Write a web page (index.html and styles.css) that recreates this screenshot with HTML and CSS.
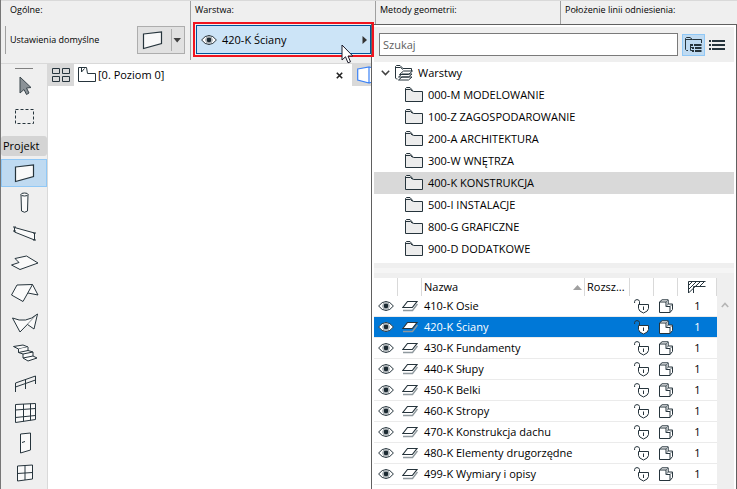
FILE: index.html
```html
<!DOCTYPE html>
<html lang="pl">
<head>
    <meta charset="UTF-8">
    <meta name="viewport" content="width=device-width, initial-scale=1.0">
    <title>Poziom 0</title>
    <link rel="stylesheet" href="styles.css">
</head>
<body>
    <!-- Icon shapes used in the lists -->
    <svg class="sprite" aria-hidden="true">
        <symbol id="eye" viewBox="0 0 16 12">
            <path d="M.6 6Q4 1.5 8 1.5T15.4 6Q12 10.5 8 10.5T.6 6Z" fill="#fff" stroke="#26343c"/>
            <circle cx="8" cy="6" r="3.3" fill="none" stroke="#78848a" stroke-width=".8"/>
            <circle cx="8" cy="6" r="2.4" fill="#1c2a32"/>
        </symbol>
        <symbol id="folder" viewBox="0 0 18 16">
            <path d="M.5 14.5V1.5L1.5 .5H5L8.5 4.5H17.5V14.5Z" fill="#ececec" stroke="#26343c"/>
            <path d="M1 2.5H5.5L7.5 4.5" fill="none" stroke="#26343c"/>
        </symbol>
        <symbol id="layer" viewBox="0 0 16 12">
            <path d="M1 10.5H10.5L15.5 4" fill="none" stroke="#8f999e" stroke-width="1.4"/>
            <path d="M.8 7.5L5.5 1.5H15L10.3 7.5Z" class="sheet" stroke="#26343c" stroke-width="1.2"/>
        </symbol>
        <symbol id="lock" viewBox="0 0 16 15">
            <path d="M.6 4V2.5Q.8 .6 3 .6T5.5 2.5V5" fill="none" stroke="#26343c"/>
            <path d="M4.5 5.5H14.5V9.5Q14.3 12.3 9.5 14Q4.7 12.3 4.5 9.5Z" fill="#fff" stroke="#26343c"/>
            <path d="M9.5 7.5V11" stroke="#26343c"/>
        </symbol>
        <symbol id="solid" viewBox="0 0 14 14">
            <path d="M.5 13.5V3L3 .8H9.2V5H13.5V10.5L11 13.5Z" fill="#fff" stroke="#26343c"/>
            <path d="M.5 3H7V7.5H11V13.5" fill="none" stroke="#26343c"/>
            <path d="M7 3L9 1M7 7.5L9.2 5M11 7.5L13.3 5.3" stroke="#66727a"/>
        </symbol>
        <symbol id="wall" viewBox="0 0 28 22">
            <path d="M4.5 5L22.5 3V14.5L4.5 19.5Z" fill="#f9f9f9" stroke="#26343c" stroke-width="1.2"/>
        </symbol>
    </svg>

    <header class="infobox">
        <section class="panel panel-general">
            <h2>Ogólne:</h2>
            <div class="defaults">
                <span>Ustawienia domyślne</span>
                <button class="wall-btn" type="button" aria-label="Ściana">
                    <svg width="28" height="22"><use href="#wall"/></svg>
                    <svg class="split" width="12" height="22" viewBox="0 0 12 22"><path d="M.5 0V22" stroke="#adadad"/><path d="M2.5 9H10L6.2 13.5Z" fill="#404040"/></svg>
                </button>
            </div>
        </section>
        <section class="panel">
            <h2>Warstwa:</h2>
            <div class="highlight">
                <button class="layer-btn" type="button">
                    <svg width="16" height="12"><use href="#eye"/></svg>
                    <span>420-K Ściany</span>
                    <svg width="5" height="8" viewBox="0 0 5 8"><path d="M.5 0L5 4L.5 8Z" fill="#333"/></svg>
                </button>
            </div>
        </section>
        <section class="panel">
            <h2>Metody geometrii:</h2>
        </section>
        <section class="panel panel-last">
            <h2>Położenie linii odniesienia:</h2>
        </section>
    </header>

    <div class="workspace">
        <nav class="toolbox">
            <button class="tool" type="button" aria-label="Strzałka">
                <svg width="28" height="24" viewBox="0 0 28 24"><path d="M9 3L20 13.5L15.5 14L18 19L15.5 20.5L13 15.5L9 19Z" fill="#8b9297" stroke="#3b464d"/></svg>
            </button>
            <button class="tool" type="button" aria-label="Obszar zaznaczenia">
                <svg width="28" height="24" viewBox="0 0 28 24"><path d="M4.5 5.5H22.5V19.5H4.5Z" fill="none" stroke="#26343c" stroke-dasharray="3 2"/></svg>
            </button>
            <button class="group" type="button">Projekt</button>
            <button class="tool active" type="button" aria-label="Ściana">
                <svg width="28" height="22"><use href="#wall"/></svg>
            </button>
            <button class="tool" type="button" aria-label="Słup">
                <svg width="28" height="24" viewBox="0 0 28 24" class="line"><path d="M10 3.5L10.5 20Q13.5 22.5 16.5 20L17 3.5"/><ellipse cx="13.5" cy="3.5" rx="3.5" ry="1.5"/></svg>
            </button>
            <button class="tool" type="button" aria-label="Belka">
                <svg width="28" height="24" viewBox="0 0 28 24" class="line"><path d="M3.5 6.5L23.5 12V19L3.5 11Z"/><path d="M2 6H5M2 10H5M22 12H25M22 19H25"/></svg>
            </button>
            <button class="tool" type="button" aria-label="Strop">
                <svg width="28" height="24" viewBox="0 0 28 24" class="line"><path d="M4 7.5L15.500 5L27 12L9 18.5L.5 14L8 11.500Z"/></svg>
            </button>
            <button class="tool" type="button" aria-label="Dach">
                <svg width="28" height="24" viewBox="0 0 28 24" class="line"><path d="M21.5 3.5L27 14L17 12"/><path d="M6 4L21.5 3.5L12 20.5L.5 14Z"/></svg>
            </button>
            <button class="tool" type="button" aria-label="Powłoka">
                <svg width="28" height="24" viewBox="0 0 28 24" class="line"><path d="M1.5 7Q15 13 26.5 3L9 21Z"/><path d="M26.5 3L23 18L16.5 13.5"/></svg>
            </button>
            <button class="tool" type="button" aria-label="Schody">
                <svg width="28" height="24" viewBox="0 0 28 24" class="line"><path d="M2.5 5.5L12 4L17 6L7.5 8Z"/><path d="M7.5 8V11.5L17 9.5V6M7.5 11.5L12 13L22 11L17 9.5M12 13V17L22 15V11M12 17L17 20L26 17L22 15"/></svg>
            </button>
            <button class="tool" type="button" aria-label="Balustrada">
                <svg width="28" height="24" viewBox="0 0 28 24" class="line"><path fill="none" d="M4.5 21V12L24.5 5V13M14.5 8.5V18M4.5 16L24.5 9"/></svg>
            </button>
            <button class="tool" type="button" aria-label="Ściana kurtynowa">
                <svg width="28" height="24" viewBox="0 0 28 24" class="line"><path d="M4.5 3.5L24.5 2.5V18.5L4.500 21.5ZM12.5 3V20.5M19.5 2.5V19.5M4.5 9L24.5 7.5M4.5 16.5L24.5 14.5"/></svg>
            </button>
            <button class="tool" type="button" aria-label="Drzwi">
                <svg width="28" height="24" viewBox="0 0 28 24" class="line"><path d="M9.5 3L19.5 2V19L9.5 22Z"/><path d="M11 11.5L14 10.5"/></svg>
            </button>
            <button class="tool" type="button" aria-label="Okno">
                <svg width="28" height="24" viewBox="0 0 28 24" class="line"><path d="M6.5 5L21.5 4V18L6.5 20ZM14 4.5V19M6.5 12.5L21.5 11.5"/></svg>
            </button>
        </nav>

        <main class="drawing">
            <div class="tabs">
                <button class="overview" type="button" aria-label="Przegląd zakładek">
                    <svg width="18" height="14" viewBox="0 0 18 14"><path d="M.5 .5H7.5V5.5H.5ZM10.5 .5H17.5V5.5H10.5ZM.5 8.5H7.5V13.5H.5ZM10.5 8.5H17.5V13.5H10.5Z" fill="none" stroke="#26343c"/></svg>
                </button>
                <div class="tab">
                    <svg width="19" height="16" viewBox="0 0 19 16"><path d="M.5 14.5V.5H8.5L9.500 6.500H17.5V14.5Z" fill="#fff" stroke="#26343c"/><path d="M3.500 1V5L6.500 1.500" fill="none" stroke="#26343c"/></svg>
                    <span>[0. Poziom 0]</span>
                    <button class="close" type="button" aria-label="Zamknij">
                        <svg width="7" height="7" viewBox="0 0 7 7"><path d="M.8 .8L6.2 6.2M6.2 .8L.8 6.2" stroke="#222" stroke-width="1.6"/></svg>
                    </button>
                </div>
                <div class="tab tab-3d">
                    <svg width="22" height="18" viewBox="0 0 22 18"><path d="M.7 3L12 1V17L.7 14ZM12 1L21 3V14L12 17" fill="#fff" stroke="#3b82f6" stroke-width="1.2"/></svg>
                </div>
            </div>
        </main>
    </div>

    <div class="popup">
        <div class="search-bar">
            <input type="text" placeholder="Szukaj" aria-label="Szukaj">
            <button class="view active" type="button" aria-label="Widok drzewa">
                <svg width="17" height="16" viewBox="0 0 17 16"><path d="M3 13.5H1.5L.5 12.5V1.5L1.5 .5H5L7.5 2.5H16.5V6" fill="none" stroke="#26343c"/><path d="M1 2.5H7.5M5.5 7V13.5H8M5.5 10.5H8" fill="none" stroke="#26343c"/><path d="M5 8H8M9 8H16.5M7 11H9M10 11H16.5M7 14H9M10 14H16.5" stroke="#26343c" stroke-width="2"/></svg>
            </button>
            <button class="view view-list" type="button" aria-label="Widok listy">
                <svg width="16" height="10" viewBox="0 0 16 10"><path d="M0 1H2M3 1H16M0 5H2M3 5H16M0 9H2M3 9H16" stroke="#26343c" stroke-width="2"/></svg>
            </button>
        </div>

        <ul class="tree">
            <li class="root">
                <svg width="9" height="6" viewBox="0 0 9 6"><path d="M.8 .8L4.5 4.6L8.2 .8" fill="none" stroke="#404040" stroke-width="1.5"/></svg>
                <svg width="18" height="16" viewBox="0 0 18 16"><path d="M2.5 14H1.5L.5 13V1.5L1.5 .5H5L8 3.5H16.5V6M1 2.5H5.5L8 4.5" fill="none" stroke="#26343c"/><path d="M3.500 15L7 12H17L13.500 15ZM3.500 12L7 9H17L13.500 12ZM4.500 9.500L8.500 6H17.500L13.500 9.500Z" fill="#fff" stroke="#26343c"/></svg>
                <span>Warstwy</span>
            </li>
            <li><svg width="18" height="16"><use href="#folder"/></svg>000-M MODELOWANIE</li>
            <li><svg width="18" height="16"><use href="#folder"/></svg>100-Z ZAGOSPODAROWANIE</li>
            <li><svg width="18" height="16"><use href="#folder"/></svg>200-A ARCHITEKTURA</li>
            <li><svg width="18" height="16"><use href="#folder"/></svg>300-W WNĘTRZA</li>
            <li class="selected"><svg width="18" height="16"><use href="#folder"/></svg>400-K KONSTRUKCJA</li>
            <li><svg width="18" height="16"><use href="#folder"/></svg>500-I INSTALACJE</li>
            <li><svg width="18" height="16"><use href="#folder"/></svg>800-G GRAFICZNE</li>
            <li><svg width="18" height="16"><use href="#folder"/></svg>900-D DODATKOWE</li>
        </ul>

        <div class="splitter"></div>

        <div class="layers">
            <table>
                <colgroup>
                    <col class="c-icon"><col class="c-icon"><col><col class="c-ext"><col class="c-icon"><col class="c-icon"><col class="c-num">
                </colgroup>
                <thead>
                    <tr>
                        <th></th>
                        <th></th>
                        <th><div class="sort">Nazwa <svg width="9" height="5" viewBox="0 0 9 5"><path d="M0 5L4.5 0L9 5Z" fill="#a0a0a0"/></svg></div></th>
                        <th>Rozsz...</th>
                        <th></th>
                        <th></th>
                        <th class="center"><svg width="18" height="12" viewBox="0 0 18 12"><path d="M.5 12V.5H17.5M5.5 12V5.5H17.5" fill="none" stroke="#26343c"/><path d="M1 4L4 1M1 8L8 1M1 11.5L12 1M8 5L12 1M12 5L16 1" stroke="#26343c"/></svg></th>
                    </tr>
                </thead>
                <tbody>
                    <tr>
                        <td class="icon"><svg width="16" height="12"><use href="#eye"/></svg></td>
                        <td class="icon"><svg width="16" height="12"><use href="#layer"/></svg></td>
                        <td colspan="2">410-K Osie</td>
                        <td class="icon"><svg width="16" height="15"><use href="#lock"/></svg></td>
                        <td class="icon wide"><svg width="14" height="14"><use href="#solid"/></svg></td>
                        <td class="center">1</td>
                    </tr>
                    <tr class="selected">
                        <td class="icon"><svg width="16" height="12"><use href="#eye"/></svg></td>
                        <td class="icon"><svg width="16" height="12"><use href="#layer"/></svg></td>
                        <td colspan="2">420-K Ściany</td>
                        <td class="icon"><svg width="16" height="15"><use href="#lock"/></svg></td>
                        <td class="icon wide"><svg width="14" height="14"><use href="#solid"/></svg></td>
                        <td class="center">1</td>
                    </tr>
                    <tr>
                        <td class="icon"><svg width="16" height="12"><use href="#eye"/></svg></td>
                        <td class="icon"><svg width="16" height="12"><use href="#layer"/></svg></td>
                        <td colspan="2">430-K Fundamenty</td>
                        <td class="icon"><svg width="16" height="15"><use href="#lock"/></svg></td>
                        <td class="icon wide"><svg width="14" height="14"><use href="#solid"/></svg></td>
                        <td class="center">1</td>
                    </tr>
                    <tr>
                        <td class="icon"><svg width="16" height="12"><use href="#eye"/></svg></td>
                        <td class="icon"><svg width="16" height="12"><use href="#layer"/></svg></td>
                        <td colspan="2">440-K Słupy</td>
                        <td class="icon"><svg width="16" height="15"><use href="#lock"/></svg></td>
                        <td class="icon wide"><svg width="14" height="14"><use href="#solid"/></svg></td>
                        <td class="center">1</td>
                    </tr>
                    <tr>
                        <td class="icon"><svg width="16" height="12"><use href="#eye"/></svg></td>
                        <td class="icon"><svg width="16" height="12"><use href="#layer"/></svg></td>
                        <td colspan="2">450-K Belki</td>
                        <td class="icon"><svg width="16" height="15"><use href="#lock"/></svg></td>
                        <td class="icon wide"><svg width="14" height="14"><use href="#solid"/></svg></td>
                        <td class="center">1</td>
                    </tr>
                    <tr>
                        <td class="icon"><svg width="16" height="12"><use href="#eye"/></svg></td>
                        <td class="icon"><svg width="16" height="12"><use href="#layer"/></svg></td>
                        <td colspan="2">460-K Stropy</td>
                        <td class="icon"><svg width="16" height="15"><use href="#lock"/></svg></td>
                        <td class="icon wide"><svg width="14" height="14"><use href="#solid"/></svg></td>
                        <td class="center">1</td>
                    </tr>
                    <tr>
                        <td class="icon"><svg width="16" height="12"><use href="#eye"/></svg></td>
                        <td class="icon"><svg width="16" height="12"><use href="#layer"/></svg></td>
                        <td colspan="2">470-K Konstrukcja dachu</td>
                        <td class="icon"><svg width="16" height="15"><use href="#lock"/></svg></td>
                        <td class="icon wide"><svg width="14" height="14"><use href="#solid"/></svg></td>
                        <td class="center">1</td>
                    </tr>
                    <tr>
                        <td class="icon"><svg width="16" height="12"><use href="#eye"/></svg></td>
                        <td class="icon"><svg width="16" height="12"><use href="#layer"/></svg></td>
                        <td colspan="2">480-K Elementy drugorzędne</td>
                        <td class="icon"><svg width="16" height="15"><use href="#lock"/></svg></td>
                        <td class="icon wide"><svg width="14" height="14"><use href="#solid"/></svg></td>
                        <td class="center">1</td>
                    </tr>
                    <tr>
                        <td class="icon"><svg width="16" height="12"><use href="#eye"/></svg></td>
                        <td class="icon"><svg width="16" height="12"><use href="#layer"/></svg></td>
                        <td colspan="2">499-K Wymiary i opisy</td>
                        <td class="icon"><svg width="16" height="15"><use href="#lock"/></svg></td>
                        <td class="icon wide"><svg width="14" height="14"><use href="#solid"/></svg></td>
                        <td class="center">1</td>
                    </tr>
                </tbody>
            </table>
            <div class="scrollbar">
                <svg width="8" height="6" viewBox="0 0 8 6"><path d="M.8 5L4 1.5L7.2 5" fill="none" stroke="#b5b5b5" stroke-width="1.6"/></svg>
            </div>
        </div>
    </div>

    <svg class="cursor" width="13" height="20" viewBox="0 0 13 20" aria-hidden="true"><path d="M1 1V16L4.5 12.8L7 18.8L9.5 17.8L7 12H11.8Z" fill="#fff" stroke="#1a1a2a"/></svg>
</body>
</html>
```
FILE: styles.css
```css
* {
    box-sizing: border-box;
}

body {
    margin: 0;
    height: 100vh;
    position: relative;
    display: flex;
    flex-direction: column;
    overflow: hidden;
    border-left: 1px solid #777;
    background-color: #fff;
    color: #000;
    font-family: "Open Sans", "Noto Sans", sans-serif;
    font-size: 11px;
    line-height: 16px;
}

button {
    display: flex;
    align-items: center;
    justify-content: center;
    margin: 0;
    padding: 0;
    border: 0;
    background: none;
    color: inherit;
    font: inherit;
}

svg {
    display: block;
    flex: none;
}

.sprite {
    position: absolute;
    width: 0;
    height: 0;
}

/* Info box */
.infobox {
    display: flex;
    height: 64px;
    padding-bottom: 3px;
    border-top: 1px solid #d9d9d9;
    border-bottom: 1px solid #d9d9d9;
    background-color: #efefef;
    font-size: 9px;
}

.panel {
    flex: 0 0 185px;
    border-right: 1px solid #a0a0a0;
}

.panel-general {
    flex-basis: 190px;
}

.panel-last {
    flex: 1;
    border-right: 0;
}

.panel h2 {
    margin: 0;
    padding: 1px 4px;
    font-size: 9px;
    font-weight: 400;
    line-height: 16px;
}

.panel-general h2 {
    padding-left: 9px;
}

.defaults {
    display: flex;
    align-items: center;
    justify-content: space-between;
    height: 28px;
    margin: 7px 5px 0 4px;
    padding-left: 4px;
    border-left: 1px solid #a0a0a0;
}

.wall-btn {
    width: 48px;
    height: 28px;
    border: 1px solid #adadad;
    background-color: #e1e1e1;
    gap: 4px;
}

.highlight {
    position: relative;
    z-index: 3;
    width: 181px;
    margin: 3px 0 0 2px;
    border: 2px solid #f0141e;
    padding: 1px;
}

.layer-btn {
    width: 100%;
    height: 29px;
    padding: 0 3px 0 4px;
    gap: 5px;
    border: 1px solid #00559b;
    background-color: #cce4f7;
    font-size: 11px;
}

.layer-btn span {
    flex: 1;
    text-align: left;
}

/* Toolbox */
.workspace {
    flex: 1;
    display: flex;
    min-height: 0;
}

.toolbox {
    flex: 0 0 47px;
    display: flex;
    flex-direction: column;
    gap: 2px;
    padding-top: 4px;
    overflow: hidden;
    border-right: 1px solid #d9d9d9;
    background-color: #efefef;
}

.toolbox::before {
    content: "";
    flex: none;
    width: 18px;
    margin: 0 0 1px 14px;
    border-top: 1px solid #808080;
}

.tool {
    flex: none;
    height: 28px;
    padding-left: 2px;
}

.tool.active {
    border: 1px solid #90c8f6;
    background-color: #bfdaf1;
}

.group {
    flex: none;
    height: 20px;
    margin: 4px 0 1px;
    border-radius: 3px;
    background-color: #d4d4d4;
    padding-left: 2px;
    justify-content: flex-start;
}

.line {
    fill: #fafafa;
    stroke: #26343c;
    stroke-linejoin: round;
}

/* Tabs */
.drawing {
    flex: 1;
    min-width: 0;
}

.tabs {
    display: flex;
    height: 22px;
}

.overview {
    width: 26px;
    background-color: #d9d9d9;
}

.tab {
    flex: 0 0 278px;
    display: flex;
    align-items: center;
    gap: 1px;
    padding: 0 9px 0 4px;
}

.tab span {
    flex: 1;
}

.tab-3d {
    flex: 1;
    padding-left: 5px;
    background-color: #d9d9d9;
}

/* Layer popup */
.popup {
    position: absolute;
    z-index: 2;
    top: 24px;
    right: 0;
    bottom: 0;
    left: 370px;
    display: flex;
    flex-direction: column;
    padding: 2px 2px 0;
    border: 1px solid #606060;
    border-width: 1px 1px 0;
    background-color: #fff;
}

.search-bar {
    display: flex;
    align-items: center;
    gap: 4px;
    height: 35px;
    padding: 0 9px 0 5px;
    background-color: #efefef;
}

.search-bar input {
    flex: 1;
    min-width: 0;
    height: 23px;
    padding: 0 3px;
    border: 1px solid #7a7a7a;
    background-color: #fff;
    font: inherit;
}

.search-bar input::placeholder {
    color: #606060;
    opacity: 1;
}

.view {
    width: 23px;
    height: 22px;
}

.view-list {
    width: 16px;
}

.view.active {
    border: 1px solid #90c8f6;
    background-color: #bfdaf1;
}

.tree {
    margin: 0;
    padding: 0 0 3px;
    list-style: none;
}

.tree li {
    display: flex;
    align-items: center;
    gap: 5px;
    height: 22px;
    padding-left: 31px;
}

.tree .root {
    padding-left: 7px;
}

.tree .selected {
    background-color: #d9d9d9;
}

.splitter {
    height: 15px;
    border: solid #efefef;
    border-width: 5px 0;
    background-color: #f5f5f5;
}

.layers {
    flex: 1;
    display: flex;
    align-items: flex-start;
    min-height: 0;
    overflow: hidden;
}

table {
    flex: 1;
    table-layout: fixed;
    border-spacing: 0;
    width: 0;
}

.c-icon {
    width: 24px;
}

.c-ext {
    width: 45px;
}

.c-num {
    width: 39px;
}

th,
td {
    padding: 0 0 0 2px;
    text-align: left;
    font-weight: 400;
    white-space: nowrap;
}

th {
    height: 18px;
    border-right: 1px solid #d9d9d9;
}

td {
    height: 21px;
    border-bottom: 1px solid #ebebeb;
}

.icon {
    padding-left: 4px;
}

.icon.wide {
    padding-left: 5px;
}

.center {
    padding: 0;
    text-align: center;
}

.center svg {
    margin: 0 auto;
}

.sort {
    display: flex;
    align-items: center;
    justify-content: space-between;
    padding-right: 2px;
}

.sheet {
    fill: #fff;
}

tr.selected td {
    background-color: #0078d7;
    color: #fff;
}

tr.selected .sheet {
    fill: #0078d7;
}

.scrollbar {
    align-self: stretch;
    width: 17px;
    padding: 24px 0 0 4px;
    background-color: #efefef;
}

/* Mouse pointer over the layer button */
.cursor {
    position: absolute;
    z-index: 4;
    top: 44px;
    left: 340px;
}
```
